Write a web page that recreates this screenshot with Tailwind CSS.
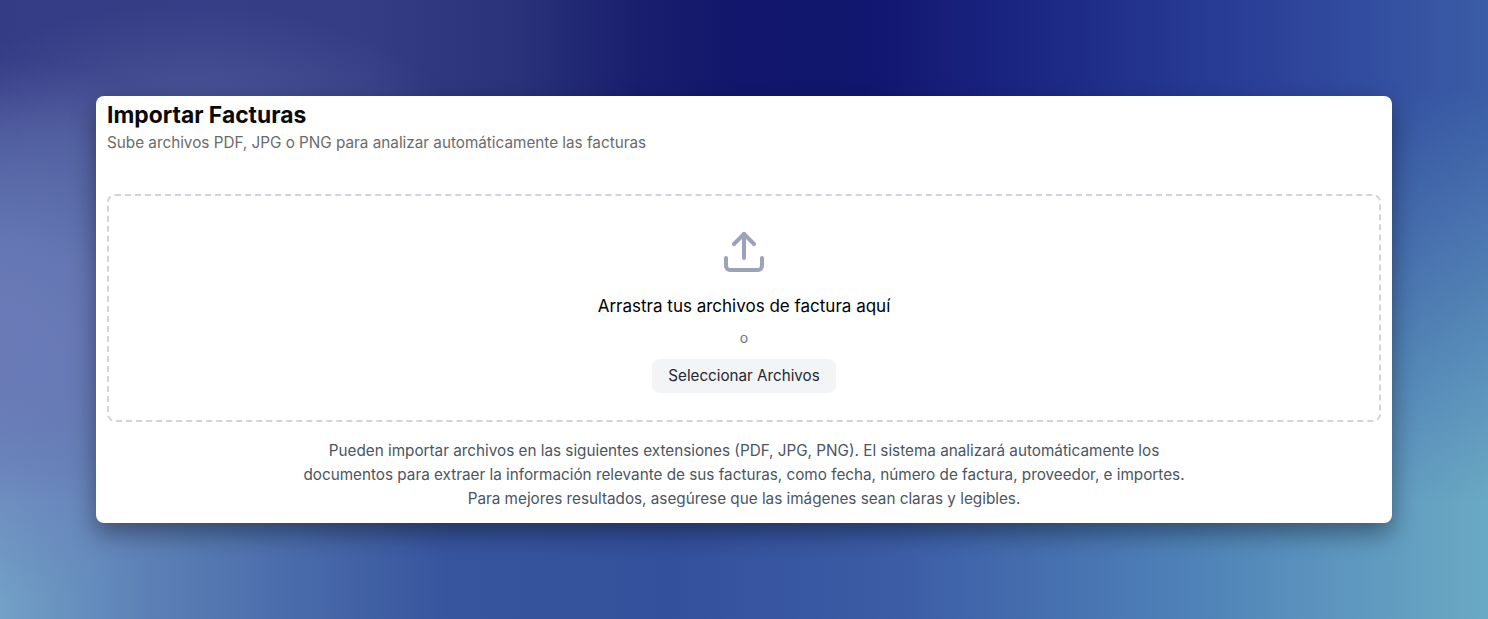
<!DOCTYPE html>
<html lang="es">
<head>
<meta charset="utf-8">
<script src="https://cdn.jsdelivr.net/npm/@tailwindcss/browser@4"></script>
<title>Importar Facturas</title>
</head>
<body class="m-0">
<main class="relative isolate h-[619px] w-full overflow-hidden flex flex-col items-center pt-24 font-['Inter',sans-serif] bg-[linear-gradient(90deg,#72a0c6_0%,#5c80b6_10%,#37559e_30%,#33509c_45%,#3c5ca6_60%,#4f82b8_80%,#6aa9c4_100%)]">
  <div aria-hidden="true" class="absolute inset-0 -z-10 bg-[radial-gradient(ellipse_260px_120px_at_190px_125px,#4d5798_0%,#4d579800_100%),linear-gradient(90deg,#343c85_0%,#363e86_15%,#343d84_25%,#2a3279_35%,#191e6e_43%,#12166c_50%,#11166e_58%,#1a2582_68%,#2a3f98_84%,#3b5ca6_100%)] [mask-image:linear-gradient(180deg,#000_0px,#000_90px,transparent_500px)]"></div>
  <div aria-hidden="true" class="absolute inset-0 -z-10 bg-[radial-gradient(ellipse_300px_270px_at_0px_330px,#6a7ab8_0%,#6a7ab8d0_35%,#6a7ab800_100%)]"></div>
  <section class="shrink-0 w-[1296px] h-[427px] bg-white rounded-lg shadow-[0_10px_25px_rgba(0,0,0,0.4)] px-[11px] flex flex-col">
    <header class="pt-[5px]">
      <h1 class="text-[22.85px] leading-[28px] font-bold text-[#0a0a0a]">Importar Facturas</h1>
      <p class="mt-[2px] text-[15.28px] leading-[24px] text-[#6b6b6b]">Sube archivos PDF, JPG o PNG para analizar automáticamente las facturas</p>
    </header>
    <div class="shrink-0 mt-[39px] h-[228px] rounded-lg border-2 border-dashed border-[#d1d5db] flex flex-col items-center pt-[32px]">
      <svg class="w-12 h-12 text-[#9ca3b8]" viewBox="0 0 24 24" fill="none" stroke="currentColor" stroke-width="2" stroke-linecap="round" stroke-linejoin="round" aria-hidden="true">
        <path d="M21 15v4a2 2 0 0 1-2 2H5a2 2 0 0 1-2-2v-4"/>
        <polyline points="17 8 12 3 7 8"/>
        <line x1="12" y1="3" x2="12" y2="15"/>
      </svg>
      <p class="mt-[16px] text-[17px] leading-[28px] text-black">Arrastra tus archivos de factura aquí</p>
      <p class="mt-[8px] text-sm leading-[20px] text-[#6b7280]">o</p>
      <button class="mt-[11px] h-[34px] px-4 pt-[1px] rounded-lg bg-[#f3f4f6] text-[15.2px] text-[#1f2937]">Seleccionar Archivos</button>
    </div>
    <p class="mt-[17px] mx-auto max-w-[896px] text-center text-[15.28px] leading-[24px] text-[#4b5563]">Pueden importar archivos en las siguientes extensiones (PDF, JPG, PNG). El sistema analizará automáticamente los documentos para extraer la información relevante de sus facturas, como fecha, número de factura, proveedor, e importes.<br>Para mejores resultados, asegúrese que las imágenes sean claras y legibles.</p>
  </section>
</main>
</body>
</html>
